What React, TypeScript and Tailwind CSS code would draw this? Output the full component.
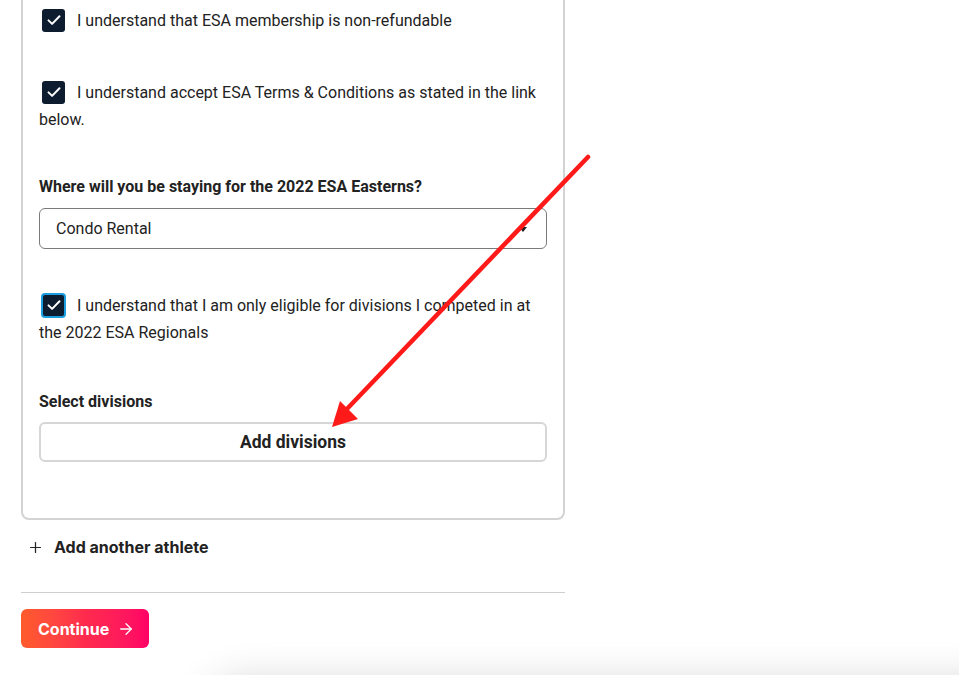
import { Plus, ArrowRight } from 'lucide-react'

function Checkbox({ focused = false }: { focused?: boolean }) {
  return (
    <span
      className={`inline-flex align-middle items-center justify-center w-[23px] h-[23px] rounded-[3px] bg-[#0e1c30] ml-[3px] mr-[12px] -mt-[3px] ${
        focused ? 'outline outline-2 outline-[#1b9ee0] -outline-offset-1' : ''
      }`}
    >
      <svg width="16" height="16" viewBox="0 0 16 16" fill="none">
        <path d="M2.5 8.4l3.6 3.5 7.4-7.6" stroke="white" strokeWidth="2" strokeLinecap="round" strokeLinejoin="round" />
      </svg>
    </span>
  )
}

export default function App() {
  return (
    <div className="relative h-[675px] w-full overflow-hidden bg-white text-[#222]">
      <div className="px-[21px]">
        {/* Athlete card */}
        <div
          className="w-[544px] border-2 border-t-0 border-[#d3d3d3] rounded-b-[8px] px-4 pt-[7px] pb-[56px] text-[16px] leading-[27px]"
          style={{ fontFamily: 'Roboto, "Liberation Sans", sans-serif' }}
        >
          <p>
            <Checkbox />I understand that ESA membership is non-refundable
          </p>

          <p className="mt-[45px]">
            <Checkbox />I understand accept ESA Terms &amp; Conditions as stated in the link below.
          </p>

          <p className="mt-[43px] text-[16px] leading-[22px] font-bold">
            Where will you be staying for the 2022 ESA Easterns?
          </p>
          <div className="relative mt-[10px] h-[41px] rounded-[6px] border border-[#7a7a7a] flex items-center pl-4">
            <span>Condo Rental</span>
            <svg className="absolute right-[19px] top-[18px]" width="8" height="5" viewBox="0 0 8 5">
              <path d="M0 0h8L4 5z" fill="#222" />
            </svg>
          </div>

          <p className="mt-[43px]">
            <Checkbox focused />I understand that I am only eligible for divisions I competed in at the 2022 ESA Regionals
          </p>

          <p className="mt-[45px] text-[16px] leading-[22px] font-bold">Select divisions</p>
          <button className="mt-[9px] w-full h-[40px] rounded-[6px] border-2 border-[#d6d6d6] font-bold text-[17.5px] text-[#222]">
            Add divisions
          </button>
        </div>

        <div
          className="w-[544px]"
          style={{ fontFamily: 'Inter, "Liberation Sans", sans-serif' }}
        >
          <button className="mt-[15px] flex items-center h-[24px] pl-[6px] gap-[10px] text-[16px] font-bold text-[#222]">
            <Plus size={17} strokeWidth={1.75} />
            Add another athlete
          </button>

          <div className="mt-[33px] h-px bg-[#cfcfcf]" />

          <button className="mt-[16px] w-[128px] h-[39px] rounded-[6px] bg-gradient-to-r from-[#ff5b2b] via-[#ff2a4d] to-[#ff0066] flex items-center gap-[8px] pl-[17px] text-white text-[16px] font-bold">
            Continue
            <ArrowRight size={18} strokeWidth={1.75} />
          </button>
        </div>
      </div>

      {/* Floating panel shadow peeking from the bottom */}
      <div className="absolute left-[205px] top-[680px] w-[900px] h-[120px] rounded-[40px] bg-white shadow-[0_0_40px_rgba(0,0,0,0.16)]" />

      {/* Red annotation arrow */}
      <svg className="absolute inset-0 pointer-events-none" width="959" height="675" viewBox="0 0 959 675">
        <line x1="588" y1="157" x2="345" y2="411" stroke="#ff1a1a" strokeWidth="4.5" strokeLinecap="round" />
        <polygon points="332,427 340,401 358,419" fill="#ff1a1a" />
      </svg>
    </div>
  )
}
